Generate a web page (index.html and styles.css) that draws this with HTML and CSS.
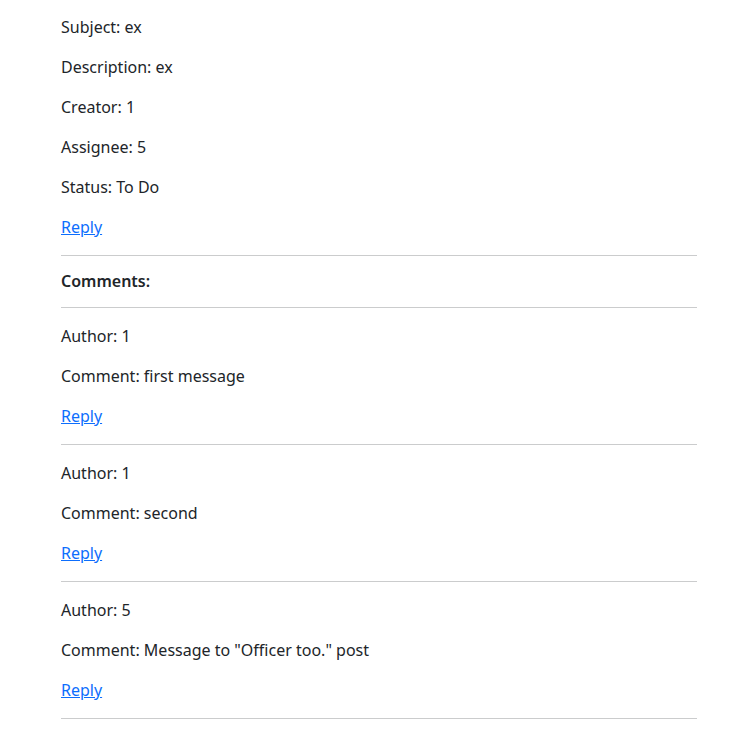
FILE: index.html
```html
<!DOCTYPE html>
<html lang="en">
<head>
<meta charset="utf-8">
<title>Ticket</title>
<link rel="stylesheet" href="styles.css">
</head>
<body>
<main class="ticket">
  <section class="details">
    <p>Subject: ex</p>
    <p>Description: ex</p>
    <p>Creator: 1</p>
    <p>Assignee: 5</p>
    <p>Status: To Do</p>
    <p><a href="#">Reply</a></p>
  </section>
  <hr class="rule">
  <div class="comments-title">Comments:</div>
  <hr class="rule">
  <section class="comment">
    <p>Author: 1</p>
    <p>Comment: first message</p>
    <p><a href="#">Reply</a></p>
  </section>
  <hr class="rule">
  <section class="comment">
    <p>Author: 1</p>
    <p>Comment: second</p>
    <p><a href="#">Reply</a></p>
  </section>
  <hr class="rule">
  <section class="comment">
    <p>Author: 5</p>
    <p>Comment: Message to "Officer too." post</p>
    <p><a href="#">Reply</a></p>
  </section>
  <hr class="rule">
</main>
</body>
</html>
```

FILE: styles.css
```css
html, body {
  margin: 0;
  padding: 0;
  background: #ffffff;
}

body {
  font-family: "Noto Sans", "Open Sans", sans-serif;
  font-size: 16px;
  line-height: 24px;
  color: #212529;
}

.ticket {
  width: 636px;
  margin-left: 61px;
  padding-top: 15px;
}

.details p,
.comment p {
  margin: 0 0 16px 0;
}

.comment {
  padding-top: 16px;
}

.rule {
  margin: 0;
  border: 0;
  border-top: 1px solid #cbcccd;
  height: 0;
}

.comments-title {
  font-weight: 600;
  margin: 13px 0 14px 0;
}

a {
  color: #0d6efd;
  text-decoration: underline;
}
```
